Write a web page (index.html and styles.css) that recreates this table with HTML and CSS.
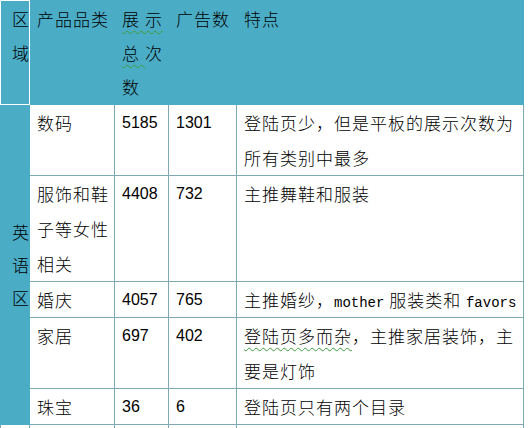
FILE: index.html
```html
<!DOCTYPE html>
<html lang="zh-CN">
<head>
<meta charset="utf-8">
<title>产品品类</title>
<link rel="stylesheet" href="styles.css">
</head>
<body>
<table class="t">
  <colgroup>
    <col class="c0"><col class="c1"><col class="c2"><col class="c3"><col class="c4">
  </colgroup>
  <thead>
    <tr>
      <th class="k">区域</th>
      <th>产品品类</th>
      <th class="jus"><span class="sq">展示</span><span class="sq">总</span>次数</th>
      <th>广告数</th>
      <th>特点</th>
    </tr>
  </thead>
  <tbody>
    <tr>
      <td class="k area" rowspan="5">英语区</td>
      <td>数码</td>
      <td class="n">5185</td>
      <td class="n">1301</td>
      <td>登陆页少，但是平板的展示次数为所有类别中最多</td>
    </tr>
    <tr>
      <td>服饰和鞋子等女性相关</td>
      <td class="n">4408</td>
      <td class="n">732</td>
      <td>主推舞鞋和服装</td>
    </tr>
    <tr>
      <td>婚庆</td>
      <td class="n">4057</td>
      <td class="n">765</td>
      <td class="nw">主推婚纱，<span class="lat">mother</span> 服装类和 <span class="lat">favors</span></td>
    </tr>
    <tr>
      <td>家居</td>
      <td class="n">697</td>
      <td class="n">402</td>
      <td><span class="sq">登陆页多而杂</span>，主推家居装饰，主要是灯饰</td>
    </tr>
    <tr>
      <td>珠宝</td>
      <td class="n">36</td>
      <td class="n">6</td>
      <td>登陆页只有两个目录</td>
    </tr>
    <tr>
      <td class="blank">&nbsp;</td>
      <td>&nbsp;</td>
      <td>&nbsp;</td>
      <td>&nbsp;</td>
      <td>&nbsp;</td>
    </tr>
  </tbody>
</table>
</body>
</html>
```

FILE: styles.css
```css
html, body {
  margin: 0;
  padding: 0;
  background: #ffffff;
}

body {
  font-family: "Noto Sans CJK SC", sans-serif;
  font-size: 17px;
  font-weight: 300;
  color: #000000;
}

.t {
  border-collapse: collapse;
  table-layout: fixed;
  width: 523px;
}

.c0 { width: 29px; }
.c1 { width: 85px; }
.c2 { width: 54px; }
.c3 { width: 68px; }
.c4 { width: 287px; }

.t th,
.t td {
  padding: 0 0 0 7px;
  line-height: 35px;
  vertical-align: top;
  text-align: left;
  font-weight: 300;
  letter-spacing: 1px;
  border: 1px solid #7fa9b3;
}

.t th {
  background: #4bacc6;
  border-color: #4bacc6;
  line-height: 34px;
  padding-top: 1px;
}

.t th.k {
  border-color: #ffffff;
  padding-left: 11px;
  letter-spacing: 0;
}

.t th.jus {
  text-align: justify;
  text-justify: inter-character;
  padding-right: 5px;
}

.t td.area {
  background: #4bacc6;
  border-color: #4bacc6;
  vertical-align: middle;
  line-height: 33px;
  padding-left: 11px;
  letter-spacing: 0;
}

.t td.n {
  font-family: "Liberation Sans", sans-serif;
  font-size: 16px;
  font-weight: normal;
  letter-spacing: 0;
}

.t td.nw {
  white-space: nowrap;
}

.lat {
  font-family: "Liberation Mono", monospace;
  font-size: 14px;
  font-weight: normal;
  letter-spacing: 0;
  line-height: 1;
}

.sq {
  text-decoration: underline wavy #3d9b3d;
  text-decoration-thickness: 1px;
  text-underline-offset: 4px;
}
```
